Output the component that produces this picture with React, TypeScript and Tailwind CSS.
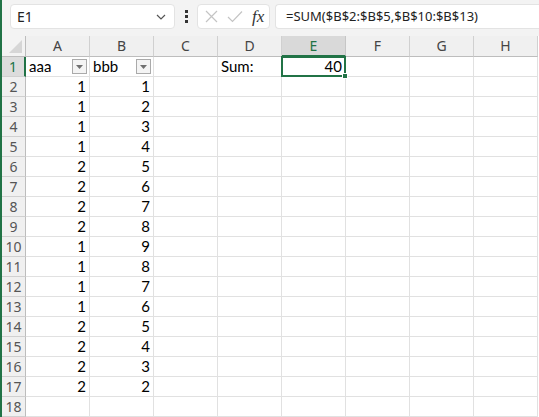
import React from 'react';

const colA = [1, 1, 1, 1, 2, 2, 2, 2, 1, 1, 1, 1, 2, 2, 2, 2];
const colB = [1, 2, 3, 4, 5, 6, 7, 8, 9, 8, 7, 6, 5, 4, 3, 2];
const letters = ['A', 'B', 'C', 'D', 'E', 'F', 'G', 'H'];

const cellFont = { fontFamily: 'Lato, "Liberation Sans", sans-serif' };
const uiFont = { fontFamily: '"Noto Sans", "Open Sans", sans-serif' };

const FilterButton: React.FC = () => (
  <div className="w-[15px] h-[15px] border border-[#aaaaaa] bg-[#f4f4f4] flex items-center justify-center shrink-0">
    <svg width="7" height="4" viewBox="0 0 7 4">
      <path d="M0 0 L7 0 L3.5 4 Z" fill="#707070" />
    </svg>
  </div>
);

type Align = 'left' | 'right' | 'between';

const alignClass: Record<Align, string> = {
  left: 'justify-start px-[3px]',
  right: 'justify-end px-[3px]',
  between: 'justify-between pl-[3px] pr-[2px]'
};

const Cell: React.FC<{ children?: React.ReactNode; align?: Align }> = ({ children, align = 'left' }) => (
  <div
    className={`h-5 border-r border-b border-[#e1e1e1] flex items-center text-[15px] text-black leading-none ${alignClass[align]}`}
    style={cellFont}
  >
    {children}
  </div>
);

const RowHeader: React.FC<{ n: number; active?: boolean }> = ({ n, active }) => (
  <div
    className={`h-5 border-b flex items-center justify-center text-[14px] leading-none ${
      active
        ? 'bg-[#dcdcdc] text-[#217346] border-r-2 border-r-[#217346] border-b-[#d0d0d0]'
        : 'bg-[#f0f0f0] text-[#555555] border-r border-r-[#bdbdbd] border-b-[#d0d0d0]'
    }`}
    style={uiFont}
  >
    {n}
  </div>
);

const App: React.FC = () => {
  const rows = Array.from({ length: 18 }, (_, i) => i + 1);

  return (
    <div className="w-[539px] h-[417px] overflow-hidden bg-white border-l-2 border-[#217346] flex flex-col">
      {/* formula bar */}
      <div className="h-[36px] bg-[#f3f3f3] flex items-start pt-1 shrink-0" style={uiFont}>
        <div className="ml-2 w-[165px] h-[25px] bg-white border border-[#e3e3e3] rounded flex items-center justify-between pl-[6px] pr-2">
          <span className="text-[14px] text-[#222222]">E1</span>
          <svg width="10" height="6" viewBox="0 0 10 6">
            <path d="M1 1 L5 5 L9 1" fill="none" stroke="#555555" strokeWidth="1.2" />
          </svg>
        </div>
        <div className="w-[22px] h-[25px] flex flex-col items-center justify-center gap-[2px]">
          <span className="w-[3px] h-[3px] bg-[#333333]" />
          <span className="w-[3px] h-[3px] bg-[#333333]" />
          <span className="w-[3px] h-[3px] bg-[#333333]" />
        </div>
        <div className="w-[73px] h-[25px] bg-white border border-[#e3e3e3] rounded flex items-center pl-[7px] pr-1">
          <svg width="13" height="13" viewBox="0 0 13 13">
            <path d="M1 1 L12 12 M12 1 L1 12" stroke="#c4c4c4" strokeWidth="1.2" />
          </svg>
          <svg width="16" height="13" viewBox="0 0 16 13" className="ml-[9px]">
            <path d="M1 7 L5.5 11.5 L15 1.5" fill="none" stroke="#c4c4c4" strokeWidth="1.2" />
          </svg>
          <span
            className="ml-[9px] text-[17px] italic text-[#333333] leading-none"
            style={{ fontFamily: '"Liberation Serif", "DejaVu Serif", serif' }}
          >
            fx
          </span>
        </div>
        <div className="ml-[5px] flex-1 h-[25px] bg-white border border-r-0 border-[#e3e3e3] rounded-l flex items-center pl-[10px]">
          <span className="text-[13px] text-[#222222]">=SUM($B$2:$B$5,$B$10:$B$13)</span>
        </div>
      </div>

      {/* grid */}
      <div className="grid grid-cols-[24px_repeat(8,64px)]">
        {/* header row */}
        <div className="h-[21px] bg-[#f3f3f3] border-r border-b border-[#bdbdbd] flex items-end justify-end p-[3px]">
          <svg width="13" height="13" viewBox="0 0 13 13">
            <path d="M13 0 L13 13 L0 13 Z" fill="#d6d6d6" />
          </svg>
        </div>
        {letters.map((l) => (
          <div
            key={l}
            className={`h-[21px] border-r flex items-center justify-center text-[14px] leading-none ${
              l === 'E'
                ? 'bg-[#d9d9d9] text-[#217346] border-b-2 border-b-[#217346] border-r-[#c6c6c6]'
                : 'bg-[#f0f0f0] text-[#444444] border-b border-b-[#bdbdbd] border-r-[#d0d0d0]'
            }`}
            style={uiFont}
          >
            {l}
          </div>
        ))}

        {rows.map((r) => (
          <React.Fragment key={r}>
            <RowHeader n={r} active={r === 1} />
            {r === 1 ? (
              <>
                <Cell align="between">
                  <span>aaa</span>
                  <FilterButton />
                </Cell>
                <Cell align="between">
                  <span>bbb</span>
                  <FilterButton />
                </Cell>
                <Cell />
                <Cell>Sum:</Cell>
                <div className="relative">
                  <Cell align="right">40</Cell>
                  <div className="absolute -left-px -top-px right-0 bottom-0 border-2 border-[#217346]" />
                  <div className="absolute -right-[2px] -bottom-[2px] w-[6px] h-[6px] bg-[#217346] border border-white" />
                </div>
                <Cell />
                <Cell />
                <Cell />
              </>
            ) : (
              <>
                <Cell align="right">{colA[r - 2]}</Cell>
                <Cell align="right">{colB[r - 2]}</Cell>
                <Cell />
                <Cell />
                <Cell />
                <Cell />
                <Cell />
                <Cell />
              </>
            )}
          </React.Fragment>
        ))}
      </div>
    </div>
  );
};

export default App;
